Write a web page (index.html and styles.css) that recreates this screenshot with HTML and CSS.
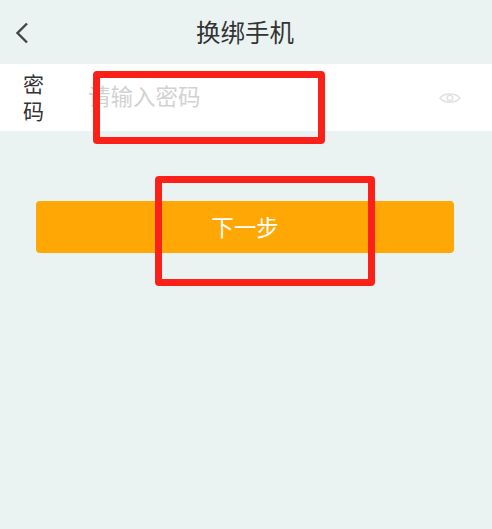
FILE: index.html
```html
<!DOCTYPE html>
<html>
<head>
  <title>换绑手机</title>
  <link rel="stylesheet" href="styles.css">
</head>
<body>
  <div class="header">
    <svg class="back-icon" width="16" height="24" viewBox="0 0 16 24">
      <path d="M13 2.5 L3.5 12 L13 21.5" fill="none" stroke="#444" stroke-width="2.4"/>
    </svg>
    <span class="title">换绑手机</span>
  </div>

  <div class="password-row">
    <span class="password-label">密码</span>
    <span class="password-input">请输入密码</span>
    <svg class="eye-icon" width="22" height="14" viewBox="0 0 22 14">
      <path d="M1 7 C5 1.5 17 1.5 21 7 C17 12.5 5 12.5 1 7 Z" fill="none" stroke="#e2e2e2" stroke-width="1.5"/>
      <circle cx="11" cy="7" r="2.8" fill="none" stroke="#e2e2e2" stroke-width="1.5"/>
    </svg>
  </div>

  <div class="button-wrap">
    <div class="next-button">下一步</div>
  </div>

  <!-- Красные рамки поверх экрана -->
  <div class="mark mark-input"></div>
  <div class="mark mark-button"></div>
</body>
</html>
```

FILE: styles.css
```css
body {
  margin: 0;
  height: 529px;
  overflow: hidden;
  position: relative;
  background-color: #ebf3f2;
  font-family: "Noto Sans CJK SC", "Liberation Sans", sans-serif;
  color: #333;
}

.header {
  height: 64px;
  display: flex;
  align-items: center;
  justify-content: center;
  padding-right: 2px;
  box-sizing: border-box;
  position: relative;
}

.title {
  font-size: 24.5px;
  line-height: 32px;
}

.back-icon {
  position: absolute;
  left: 14px;
  top: 21px;
}

.password-row {
  height: 67px;
  background-color: #fff;
  display: flex;
  align-items: center;
  padding: 0 31px 0 23px;
}

.password-label {
  width: 21px;
  font-size: 21px;
  line-height: 27px;
  padding-bottom: 2px;
}

.password-input {
  flex: 1;
  margin-left: 44px;
  padding-bottom: 6px;
  font-size: 22.5px;
  line-height: 30px;
  color: #d2d2d2;
}

.button-wrap {
  padding: 70px 38px 0 36px;
}

.next-button {
  height: 52px;
  border-radius: 4px;
  background-color: #ffa704;
  color: #fff;
  font-size: 22.5px;
  line-height: 50px;
  text-align: center;
}

.mark {
  position: absolute;
  box-sizing: border-box;
  border: 7px solid #fb2118;
  border-radius: 4px;
}

.mark-input {
  left: 93px;
  top: 71px;
  width: 232px;
  height: 73px;
}

.mark-button {
  left: 155px;
  top: 176px;
  width: 220px;
  height: 110px;
}
```
